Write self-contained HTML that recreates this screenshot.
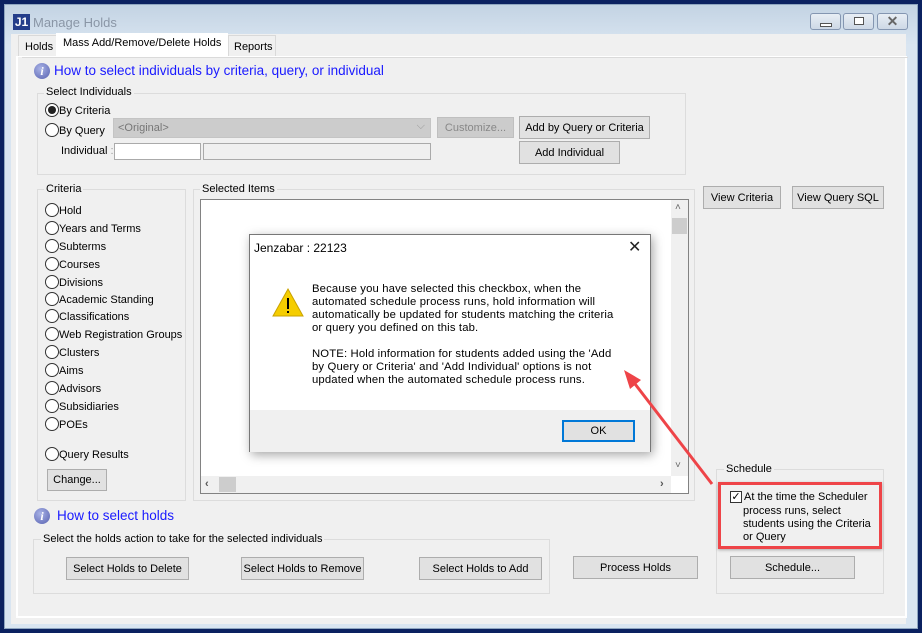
<!DOCTYPE html>
<html><head><style>
*{box-sizing:border-box;margin:0;padding:0}
body{width:922px;height:633px;background:#0b2160;font-family:"Liberation Sans",sans-serif;font-size:11px;color:#000;position:relative;overflow:hidden}
.a{position:absolute;white-space:nowrap}
.win{left:4px;top:4px;width:914px;height:625px;background:linear-gradient(#c3d3e3,#d9e5f1 40px,#d9e5f1);border:1px solid #8fa6c0}
.btn{position:absolute;white-space:nowrap;background:#e1e1e1;border:1px solid #adadad;font-size:11px;display:flex;align-items:center;justify-content:center}
.grp{position:absolute;border:1px solid #dcdcdc}
.lbl{position:absolute;white-space:nowrap;background:#f0f0f0;padding:0 2px;font-size:11px}
.rad{position:absolute;white-space:nowrap;font-size:11px;line-height:15px;padding-left:14px;padding-top:2px}
.rad:before{content:"";position:absolute;left:0;top:1px;width:12px;height:12px;border:1px solid #333;border-radius:50%;background:#fff}
.rad.on:after{content:"";position:absolute;left:3px;top:4px;width:8px;height:8px;border-radius:50%;background:#222}
.info{position:absolute;width:16px;height:16px;border-radius:50%;background:radial-gradient(circle at 40% 35%,#a9b3e6,#5660b0);color:#fff;font:bold italic 12px "Liberation Serif",serif;text-align:center;line-height:16px}
.lnk{position:absolute;white-space:nowrap;color:#1a1aff;font-size:13.5px}
.wb{position:absolute;top:13px;width:31px;height:17px;border:1px solid #8496b1;border-radius:3px;background:linear-gradient(#e8eef5,#cdd8e6)}
</style></head><body>
<div class="a win"></div>
<div class="a" style="left:13px;top:14px;width:17px;height:16px;background:#243d8a;color:#fff;font:bold 12px 'Liberation Sans';line-height:16px;text-align:center">J1</div>
<div class="a" style="left:33px;top:15px;font-size:13px;color:#8a96a6">Manage Holds</div>
<div class="wb" style="left:810px"><div class="a" style="left:9px;top:9px;width:12px;height:4px;border:1px solid #555;background:#fff"></div></div>
<div class="wb" style="left:843px"><div class="a" style="left:10px;top:3px;width:10px;height:8px;border:1px solid #555;background:#fff"></div></div>
<div class="wb" style="left:877px;color:#666;font-size:14px;font-weight:bold;text-align:center;line-height:15px">✕</div>
<div class="a" style="left:11px;top:34px;width:895px;height:590px;background:#f0f0f0"></div>
<div class="a" style="left:18px;top:35px;width:39px;height:21px;border:1px solid #d9d9d9;border-bottom:none;background:#f0f0f0;padding:5px 0 0 6px">Holds</div>
<div class="a" style="left:56px;top:33px;width:172px;height:24px;background:#fff;padding:4px 0 0 7px">Mass Add/Remove/Delete Holds</div>
<div class="a" style="left:228px;top:35px;width:48px;height:21px;border:1px solid #d9d9d9;border-bottom:none;background:#f0f0f0;padding:5px 0 0 5px">Reports</div>
<div class="a" style="left:16px;top:56px;width:891px;height:562px;border:2px solid #fff;border-top:1px solid #fff;background:#f0f0f0"></div>
<div class="a" style="left:22px;top:57px;width:886px;height:1px;background:#dadada"></div>

<div class="info" style="left:34px;top:63px">i</div>
<div class="lnk" style="left:54px;top:63px">How to select individuals by criteria, query, or individual</div>

<div class="grp" style="left:37px;top:93px;width:649px;height:82px"></div>
<div class="lbl" style="left:44px;top:86px">Select Individuals</div>
<div class="rad on" style="left:45px;top:102px">By Criteria</div>
<div class="rad" style="left:45px;top:122px">By Query</div>
<div class="a" style="left:113px;top:118px;width:318px;height:20px;background:#cccccc;border:1px solid #c4c4c4;color:#777;padding:3px 4px">&lt;Original&gt;<span style="position:absolute;right:5px;top:1px;color:#999">⌵</span></div>
<div class="btn" style="left:437px;top:117px;width:77px;height:21px;background:#cccccc;border-color:#bfbfbf;color:#888">Customize...</div>
<div class="btn" style="left:519px;top:116px;width:131px;height:23px">Add by Query or Criteria</div>
<div class="a" style="left:61px;top:145px">Individual<span style="color:#999"> :</span></div>
<div class="a" style="left:114px;top:143px;width:87px;height:17px;background:#fff;border:1px solid #aaa"></div>
<div class="a" style="left:203px;top:143px;width:228px;height:17px;background:#f0f0f0;border:1px solid #aaa"></div>
<div class="btn" style="left:519px;top:141px;width:101px;height:23px">Add Individual</div>

<div class="grp" style="left:37px;top:189px;width:149px;height:312px"></div>
<div class="lbl" style="left:44px;top:183px">Criteria</div>
<div class="rad" style="left:45px;top:202px">Hold</div>
<div class="rad" style="left:45px;top:220px">Years and Terms</div>
<div class="rad" style="left:45px;top:238px">Subterms</div>
<div class="rad" style="left:45px;top:256px">Courses</div>
<div class="rad" style="left:45px;top:274px">Divisions</div>
<div class="rad" style="left:45px;top:291px">Academic Standing</div>
<div class="rad" style="left:45px;top:308px">Classifications</div>
<div class="rad" style="left:45px;top:326px">Web Registration Groups</div>
<div class="rad" style="left:45px;top:344px">Clusters</div>
<div class="rad" style="left:45px;top:362px">Aims</div>
<div class="rad" style="left:45px;top:380px">Advisors</div>
<div class="rad" style="left:45px;top:398px">Subsidiaries</div>
<div class="rad" style="left:45px;top:416px">POEs</div>
<div class="rad" style="left:45px;top:446px">Query Results</div>
<div class="btn" style="left:47px;top:469px;width:60px;height:22px">Change...</div>

<div class="grp" style="left:193px;top:189px;width:502px;height:312px"></div>
<div class="lbl" style="left:200px;top:183px">Selected Items</div>
<div class="a" style="left:200px;top:199px;width:489px;height:295px;background:#fff;border:1px solid #828282"></div>
<div class="a" style="left:671px;top:200px;width:17px;height:276px;background:#f0f0f0"></div>
<div class="a" style="left:672px;top:218px;width:15px;height:16px;background:#cdcdcd"></div>
<div class="a" style="left:675px;top:202px;color:#666;font-size:10px">˄</div>
<div class="a" style="left:675px;top:460px;color:#666;font-size:10px">˅</div>
<div class="a" style="left:201px;top:476px;width:470px;height:17px;background:#f0f0f0"></div>
<div class="a" style="left:219px;top:477px;width:17px;height:15px;background:#cdcdcd"></div>
<div class="a" style="left:205px;top:478px;color:#555;font-weight:bold">‹</div>
<div class="a" style="left:660px;top:478px;color:#555;font-weight:bold">›</div>

<div class="btn" style="left:703px;top:186px;width:78px;height:23px">View Criteria</div>
<div class="btn" style="left:792px;top:186px;width:92px;height:23px">View Query SQL</div>

<div class="grp" style="left:716px;top:469px;width:168px;height:125px"></div>
<div class="lbl" style="left:724px;top:463px">Schedule</div>
<div class="a" style="left:718px;top:482px;width:164px;height:67px;border:3px solid #ee4448;box-shadow:0 1px 3px rgba(0,0,0,.3)"></div>
<div class="a" style="left:730px;top:491px;width:12px;height:12px;border:1px solid #333;background:#fff;font-size:11px;line-height:10px;text-align:center">✓</div>
<div class="a" style="left:744px;top:491px;line-height:13px;font-size:11px">At the time the Scheduler</div>
<div class="a" style="left:743px;top:505px;line-height:13px;font-size:11px">process runs, select<br>students using the Criteria<br>or Query</div>
<div class="btn" style="left:730px;top:556px;width:125px;height:23px">Schedule...</div>
<div class="btn" style="left:573px;top:556px;width:125px;height:23px">Process Holds</div>

<div class="info" style="left:34px;top:508px">i</div>
<div class="lnk" style="left:57px;top:508px">How to select holds</div>
<div class="grp" style="left:33px;top:539px;width:517px;height:55px"></div>
<div class="lbl" style="left:41px;top:533px">Select the holds action to take for the selected individuals</div>
<div class="btn" style="left:66px;top:557px;width:123px;height:23px">Select Holds to Delete</div>
<div class="btn" style="left:241px;top:557px;width:123px;height:23px">Select Holds to Remove</div>
<div class="btn" style="left:419px;top:557px;width:123px;height:23px">Select Holds to Add</div>

<div class="a" style="left:249px;top:234px;width:402px;height:218px;background:#fff;border:1px solid #777;box-shadow:2px 3px 10px rgba(0,0,0,.35)">
<div class="a" style="left:4px;top:6px;font-size:12px">Jenzabar : 22123</div>
<div class="a" style="left:378px;top:2px;font-size:16px;color:#222">✕</div>
<svg class="a" style="left:21px;top:52px" width="34" height="32"><polygon points="17,2 32,29 2,29" fill="#f5cd00" stroke="#c9a200"/><rect x="16" y="11" width="2" height="11" fill="#000"/><rect x="16" y="24" width="2" height="2" fill="#000"/></svg>
<div class="a" style="left:62px;top:48px;font-size:11.3px;line-height:13px;letter-spacing:0.15px">Because you have selected this checkbox, when the<br>automated schedule process runs, hold information will<br>automatically be updated for students matching the criteria<br>or query you defined on this tab.<br><br>NOTE: Hold information for students added using the 'Add<br>by Query or Criteria' and 'Add Individual' options is not<br>updated when the automated schedule process runs.</div>
<div class="a" style="left:0;top:175px;width:400px;height:42px;background:#f0f0f0"></div>
<div class="btn" style="left:312px;top:185px;width:73px;height:22px;border:2px solid #0078d7">OK</div>
</div>
<svg class="a" style="left:0;top:0" width="922" height="633"><line x1="712" y1="484" x2="632" y2="380" stroke="#ee4448" stroke-width="3"/><polygon points="624,370 641,380 630,389" fill="#ee4448"/></svg>
</body></html>
